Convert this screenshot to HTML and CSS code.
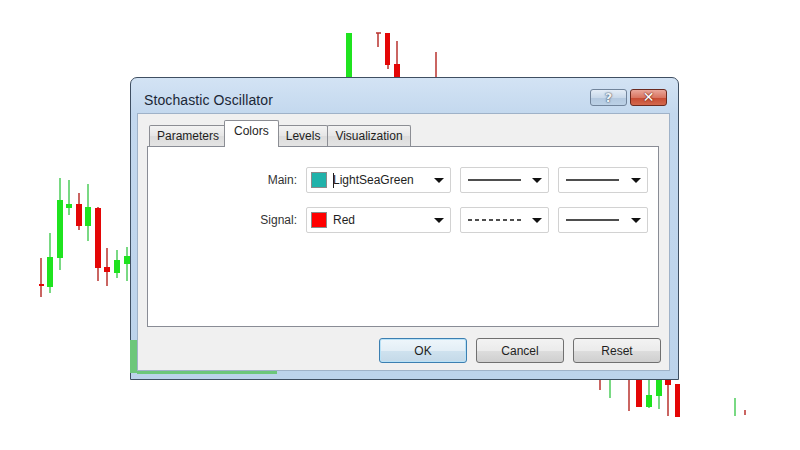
FILE: index.html
```html
<!DOCTYPE html>
<html lang="en">
<head>
    <meta charset="UTF-8">
    <title>Stochastic Oscillator</title>
    <link rel="stylesheet" href="styles.css">
</head>
<body>

    <div class="stage">
        <!-- chart in the background -->
        <svg class="chart" width="800" height="450" viewBox="0 0 800 450">
            <g class="wick-red">
                <line x1="41" y1="258" x2="41" y2="297"/>
                <line x1="79" y1="193" x2="79" y2="230"/>
                <line x1="98" y1="207" x2="98" y2="281"/>
                <line x1="107" y1="248" x2="107" y2="286"/>
                <line x1="378" y1="33" x2="378" y2="47"/>
                <line x1="376" y1="33" x2="381" y2="33"/>
                <line x1="388" y1="60" x2="388" y2="69"/>
                <line x1="397" y1="41" x2="397" y2="77"/>
                <line x1="436" y1="52" x2="436" y2="77"/>
                <line x1="600" y1="380" x2="600" y2="390"/>
                <line x1="629" y1="380" x2="629" y2="411"/>
                <line x1="668" y1="380" x2="668" y2="416"/>
                <line x1="745" y1="410" x2="745" y2="415"/>
            </g>
            <g class="wick-green">
                <line x1="50" y1="233" x2="50" y2="293"/>
                <line x1="60" y1="178" x2="60" y2="270"/>
                <line x1="69" y1="180" x2="69" y2="215"/>
                <line x1="88" y1="184" x2="88" y2="241"/>
                <line x1="117" y1="250" x2="117" y2="278"/>
                <line x1="127" y1="247" x2="127" y2="281"/>
                <line x1="610" y1="380" x2="610" y2="398"/>
                <line x1="649" y1="380" x2="649" y2="408"/>
                <line x1="659" y1="380" x2="659" y2="409"/>
                <line x1="735" y1="398" x2="735" y2="416"/>
            </g>
            <g class="body-green">
                <rect x="47" y="257" width="6" height="30"/>
                <rect x="57" y="200" width="6" height="58"/>
                <rect x="66" y="204" width="6" height="4"/>
                <rect x="85" y="207" width="6" height="19"/>
                <rect x="114" y="260" width="6" height="13"/>
                <rect x="124" y="256" width="6" height="8"/>
                <rect x="346" y="33" width="6" height="44"/>
                <rect x="646" y="395" width="6" height="12"/>
                <rect x="656" y="380" width="6" height="16"/>
            </g>
            <g class="body-red">
                <rect x="39" y="284" width="5" height="2"/>
                <rect x="76" y="204" width="6" height="22"/>
                <rect x="95" y="208" width="6" height="60"/>
                <rect x="104" y="267" width="6" height="5"/>
                <rect x="385" y="33" width="5" height="32"/>
                <rect x="394" y="64" width="6" height="13"/>
                <rect x="636" y="380" width="6" height="27"/>
                <rect x="665" y="380" width="6" height="5"/>
                <rect x="675" y="384" width="5" height="33"/>
            </g>
        </svg>

        <div class="window">
            <div class="titlebar">
                <span class="title">Stochastic Oscillator</span>
                <div class="caption-buttons">
                    <button class="cap cap-help">?</button>
                    <button class="cap cap-close">✕</button>
                </div>
            </div>

            <div class="client">
                <div class="tabs">
                    <div class="tab">Parameters</div>
                    <div class="tab active">Colors</div>
                    <div class="tab">Levels</div>
                    <div class="tab">Visualization</div>
                </div>

                <div class="panel">
                    <div class="form">
                        <label class="label">Main:</label>
                        <div class="combo">
                            <span class="swatch teal"></span>
                            <span class="combo-text"><span class="caret"></span>LightSeaGreen</span>
                            <span class="arrow"></span>
                        </div>
                        <div class="combo">
                            <span class="line solid"></span>
                            <span class="arrow"></span>
                        </div>
                        <div class="combo">
                            <span class="line solid"></span>
                            <span class="arrow"></span>
                        </div>

                        <label class="label">Signal:</label>
                        <div class="combo">
                            <span class="swatch red"></span>
                            <span class="combo-text">Red</span>
                            <span class="arrow"></span>
                        </div>
                        <div class="combo">
                            <span class="line dashed"></span>
                            <span class="arrow"></span>
                        </div>
                        <div class="combo">
                            <span class="line solid"></span>
                            <span class="arrow"></span>
                        </div>
                    </div>
                </div>

                <div class="actions">
                    <button class="btn default">OK</button>
                    <button class="btn">Cancel</button>
                    <button class="btn">Reset</button>
                </div>
            </div>

            <!-- chart showing through the glass frame -->
            <div class="bleed bleed-side"></div>
            <div class="bleed bleed-bottom"></div>
        </div>
    </div>

</body>
</html>
```

FILE: styles.css
```css
/* page */
body {
    margin: 0;
    background-color: #ffffff;
    font-family: "Liberation Sans", Arial, sans-serif;
    font-size: 12px;
    color: #1e1e1e;
}

.stage {
    position: relative;
    width: 800px;
    height: 450px;
    overflow: hidden;
}

/* background chart */
.chart {
    position: absolute;
    top: 0;
    left: 0;
}

.wick-red line {
    stroke: #b8322e;
    stroke-width: 1.5;
}

.wick-green line {
    stroke: #4ccc5a;
    stroke-width: 1.5;
}

.body-green rect {
    fill: #1fe31f;
}

.body-red rect {
    fill: #e40606;
}

/* dialog window */
.window {
    position: absolute;
    left: 130px;
    top: 77px;
    width: 549px;
    height: 303px;
    box-sizing: border-box;
    border: 1px solid #3f4f62;
    border-radius: 7px 7px 0 0;
    background: linear-gradient(#d3e3f4, #c3d8ee 36px, #bcd3eb);
    display: flex;
    flex-direction: column;
}

.titlebar {
    height: 35px;
    display: flex;
    align-items: flex-start;
    justify-content: space-between;
    flex-shrink: 0;
}

.title {
    padding: 14px 0 0 13px;
    font-size: 14px;
    line-height: 16px;
    color: #1b2736;
    letter-spacing: 0.1px;
}

.caption-buttons {
    display: flex;
    gap: 3px;
    margin: 11px 11px 0 0;
}

.cap {
    width: 37px;
    height: 17px;
    padding: 0;
    border-radius: 3px;
    font-family: "DejaVu Sans", sans-serif;
    font-weight: bold;
    line-height: 15px;
    color: #ffffff;
}

.cap-help {
    border: 1px solid #71849b;
    background: linear-gradient(#e4edf7, #c9d9ea 50%, #b3c8df 51%, #bcd1e6);
    font-size: 13px;
    color: #eef2f7;
    text-shadow: 0 0 2px #3c4c60, 0 0 1px #3c4c60;
}

.cap-close {
    border: 1px solid #6b2a1f;
    background: linear-gradient(#eaa79a, #d97662 50%, #c74a32 51%, #d3684c);
    font-size: 14px;
    text-shadow: 0 0 2px #6b1d10, 0 0 1px #6b1d10;
}

/* client area */
.client {
    flex: 1;
    margin: 0 8px 8px 6px;
    border: 1px solid #9fb2c8;
    background-color: #f0f0f0;
    padding: 7px 10px 0 9px;
    display: flex;
    flex-direction: column;
}

/* tabs */
.tabs {
    display: flex;
    align-items: flex-end;
    height: 25px;
    padding-left: 2px;
    position: relative;
    z-index: 1;
}

.tab {
    height: 20px;
    line-height: 20px;
    padding: 0 7px;
    border: 1px solid #8c8e94;
    border-bottom: none;
    margin-right: -1px;
    background: linear-gradient(#f3f3f3, #e6e6e6 50%, #dcdcdc 51%, #e4e4e4);
    border-radius: 2px 2px 0 0;
}

.tab.active {
    height: 26px;
    line-height: 20px;
    margin: 0 -1px -1px -2px;
    padding: 0 9px;
    background: #ffffff;
    position: relative;
}

/* tab page */
.panel {
    height: 181px;
    box-sizing: border-box;
    border: 1px solid #898c95;
    background-color: #ffffff;
}

.form {
    display: grid;
    grid-template-columns: 149px 145px 89px 90px;
    grid-auto-rows: 26px;
    column-gap: 9px;
    row-gap: 14px;
    padding-top: 20px;
    align-items: center;
}

.label {
    text-align: right;
    color: #333333;
}

.combo {
    height: 26px;
    box-sizing: border-box;
    border: 1px solid #d2d2d2;
    border-radius: 2px;
    background-color: #ffffff;
    display: flex;
    align-items: center;
    padding: 0 6px 0 4px;
}

.swatch {
    width: 14px;
    height: 14px;
    border: 1px solid #8a8a8a;
    flex-shrink: 0;
}

.swatch.teal {
    background-color: #20b2aa;
}

.swatch.red {
    background-color: #ff0000;
}

.combo-text {
    margin-left: 6px;
    display: flex;
    align-items: center;
}

.caret {
    width: 1px;
    height: 15px;
    background-color: #1e1e1e;
    margin-right: -1px;
}

.arrow {
    margin-left: auto;
    width: 0;
    height: 0;
    border-left: 5px solid transparent;
    border-right: 5px solid transparent;
    border-top: 5px solid #111111;
}

.line {
    width: 53px;
    margin-left: 3px;
    height: 2px;
}

.line.solid {
    background-color: #4e4e4e;
}

.line.dashed {
    background: repeating-linear-gradient(90deg, #4e4e4e 0 4px, transparent 4px 7px);
}

/* dialog buttons */
.actions {
    display: flex;
    justify-content: flex-end;
    gap: 9px;
    padding-top: 11px;
    margin-right: -2px;
}

.btn {
    width: 88px;
    height: 25px;
    border: 1px solid #707070;
    border-radius: 3px;
    background: linear-gradient(#f3f3f3, #ebebeb 50%, #dddddd 51%, #cfcfcf);
    font-family: "Liberation Sans", Arial, sans-serif;
    font-size: 12px;
    color: #1e1e1e;
    padding: 0;
}

.btn.default {
    border-color: #3c7fb1;
    box-shadow: inset 0 0 0 1px #b9e2f7;
    background: linear-gradient(#eef6fb, #e3eef6 50%, #cfe2ef 51%, #c4d9e8);
}

/* chart leaking through the frame */
.bleed {
    position: absolute;
    background-color: #6cc77a;
}

.bleed-side {
    left: -1px;
    top: 262px;
    width: 7px;
    height: 33px;
}

.bleed-bottom {
    left: 6px;
    top: 293px;
    width: 140px;
    height: 3px;
}
```
